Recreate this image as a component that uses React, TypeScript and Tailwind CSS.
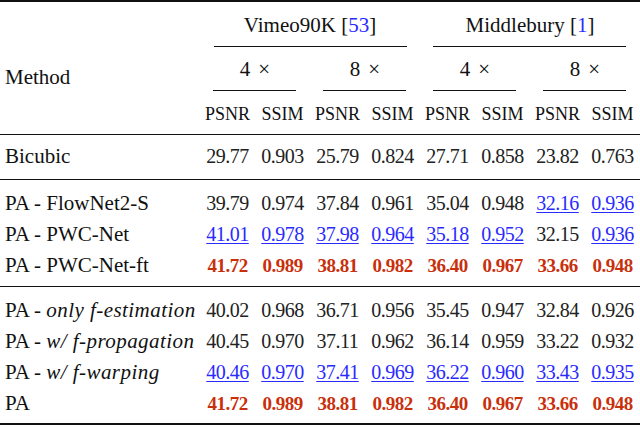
type Cell = { v: string; s?: "b" | "r" }

const ff = "font-['Liberation_Serif']"
const it = "font-['Liberation_Serif'] italic tracking-[0.45px]"

const rows: { group: number; label: React.ReactNode; cells: Cell[] }[] = [
  {
    group: 0,
    label: "Bicubic",
    cells: ["29.77", "0.903", "25.79", "0.824", "27.71", "0.858", "23.82", "0.763"].map((v) => ({ v })),
  },
  {
    group: 1,
    label: "PA - FlowNet2-S",
    cells: [
      { v: "39.79" },
      { v: "0.974" },
      { v: "37.84" },
      { v: "0.961" },
      { v: "35.04" },
      { v: "0.948" },
      { v: "32.16", s: "b" },
      { v: "0.936", s: "b" },
    ],
  },
  {
    group: 1,
    label: "PA - PWC-Net",
    cells: [
      { v: "41.01", s: "b" },
      { v: "0.978", s: "b" },
      { v: "37.98", s: "b" },
      { v: "0.964", s: "b" },
      { v: "35.18", s: "b" },
      { v: "0.952", s: "b" },
      { v: "32.15" },
      { v: "0.936", s: "b" },
    ],
  },
  {
    group: 1,
    label: "PA - PWC-Net-ft",
    cells: ["41.72", "0.989", "38.81", "0.982", "36.40", "0.967", "33.66", "0.948"].map((v) => ({ v, s: "r" as const })),
  },
  {
    group: 2,
    label: (
      <>
        PA - <i className={it}>only f-estimation</i>
      </>
    ),
    cells: ["40.02", "0.968", "36.71", "0.956", "35.45", "0.947", "32.84", "0.926"].map((v) => ({ v })),
  },
  {
    group: 2,
    label: (
      <>
        PA - <i className={it}>w/ f-propagation</i>
      </>
    ),
    cells: ["40.45", "0.970", "37.11", "0.962", "36.14", "0.959", "33.22", "0.932"].map((v) => ({ v })),
  },
  {
    group: 2,
    label: (
      <>
        PA - <i className={it}>w/ f-warping</i>
      </>
    ),
    cells: ["40.46", "0.970", "37.41", "0.969", "36.22", "0.960", "33.43", "0.935"].map((v) => ({ v, s: "b" as const })),
  },
  {
    group: 2,
    label: "PA",
    cells: ["41.72", "0.989", "38.81", "0.982", "36.40", "0.967", "33.66", "0.948"].map((v) => ({ v, s: "r" as const })),
  },
]

function Num({ c }: { c: Cell }) {
  if (c.s === "r")
    return (
      <span className={`${ff} text-[19px] font-bold tracking-[-0.5px] text-[#c8300c]`}>{c.v}</span>
    )
  if (c.s === "b")
    return (
      <span
        className={`${ff} text-[20px] tracking-[-0.5px] text-[#2a2aff] underline decoration-1 underline-offset-[2px]`}
      >
        {c.v}
      </span>
    )
  return <span className={`${ff} text-[20px] tracking-[-0.5px] text-[#222]`}>{c.v}</span>
}

function Row({ label, cells }: { label: React.ReactNode; cells: Cell[] }) {
  return (
    <div className="grid h-[31px] grid-cols-[200px_repeat(8,55px)] items-baseline leading-[31px]">
      <div className={`${ff} pl-[5px] text-[21px] text-[#111] whitespace-nowrap`}>{label}</div>
      {cells.map((c, i) => (
        <div key={i} className="text-center whitespace-nowrap">
          <Num c={c} />
        </div>
      ))}
    </div>
  )
}

const groupPad = ["pt-[6px] pb-[7px]", "pt-[8px] pb-[5px]", "pt-[8px] pb-[4px]"]

export default function App() {
  return (
    <div className={`${ff} h-[427px] w-[640px] overflow-hidden bg-white`}>
      <div className="border-t-2 border-[#111]" />

      {/* header */}
      <div className="grid grid-cols-[200px_repeat(8,55px)] text-[#111]">
        <div className={`${ff} row-span-3 pl-[5px] pt-[60px] text-[21px] leading-[31px]`}>Method</div>

        <div className="col-span-4">
          <div className={`${ff} h-[44px] pt-[8px] text-center text-[21px] leading-[31px]`}>
            Vimeo90K [<span className="text-[#2a2aff]">53</span>]
          </div>
          <div className="ml-[14px] mr-[13px] h-px bg-[#111]" />
        </div>
        <div className="col-span-4">
          <div className={`${ff} h-[44px] pt-[8px] text-center text-[21px] leading-[31px]`}>
            Middlebury [<span className="text-[#2a2aff]">1</span>]
          </div>
          <div className="ml-[13px] mr-[14px] h-px bg-[#111]" />
        </div>

        {["4", "8", "4", "8"].map((t, i) => (
          <div key={i} className="col-span-2">
            <div className={`${ff} h-[43px] pt-[7px] text-center text-[21px] leading-[31px]`}>
              {t}
              <span className="ml-[8px]">×</span>
            </div>
            <div className="ml-[13px] mr-[14px] h-px bg-[#111]" />
          </div>
        ))}

        {Array.from({ length: 8 }).map((_, i) => (
          <div key={i} className={`${ff} h-[43px] pt-[8px] text-center text-[18px] leading-[31px]`}>
            {i % 2 === 0 ? "PSNR" : "SSIM"}
          </div>
        ))}
      </div>

      {[0, 1, 2].map((g) => (
        <div key={g} className={`border-t border-[#111] ${groupPad[g]}`}>
          {rows
            .filter((r) => r.group === g)
            .map((r, i) => (
              <Row key={i} label={r.label} cells={r.cells} />
            ))}
        </div>
      ))}

      <div className="border-t-2 border-[#111]" />
    </div>
  )
}
